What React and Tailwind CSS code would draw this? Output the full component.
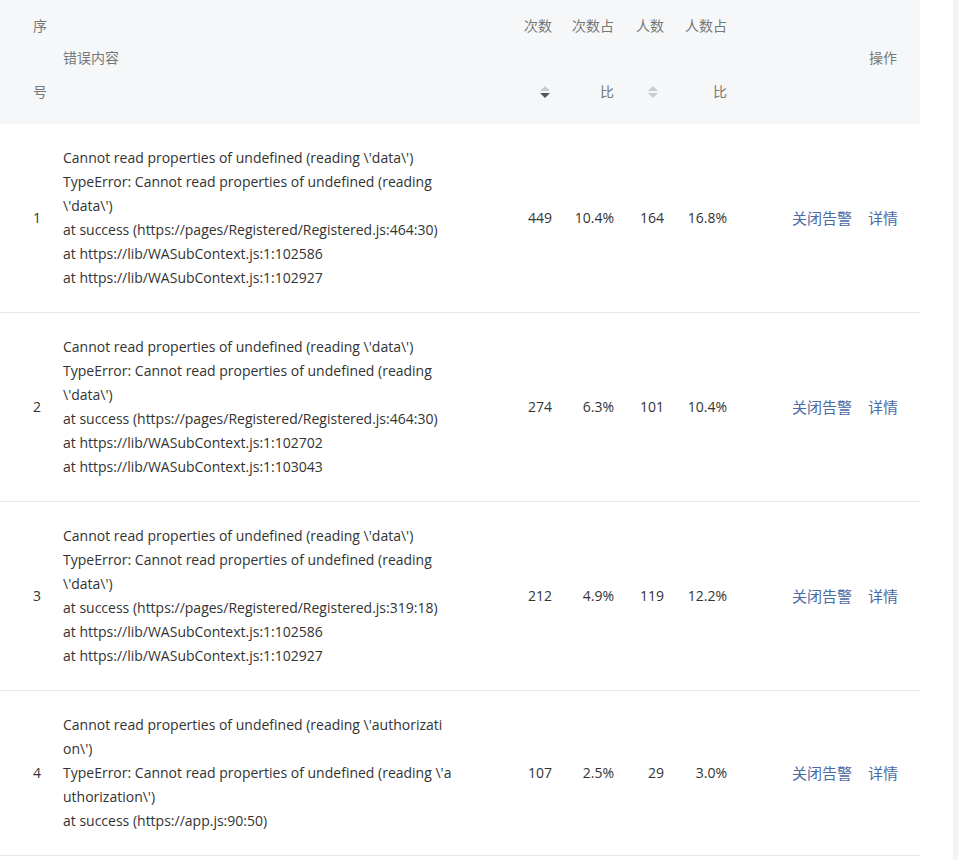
import React from 'react';

const rows = [
  {
    id: 1,
    lines: [
      "Cannot read properties of undefined (reading \\'data\\')",
      'TypeError: Cannot read properties of undefined (reading',
      "\\'data\\')",
      'at success (https://pages/Registered/Registered.js:464:30)',
      'at https://lib/WASubContext.js:1:102586',
      'at https://lib/WASubContext.js:1:102927',
    ],
    count: 449, countPct: '10.4%', users: 164, usersPct: '16.8%',
  },
  {
    id: 2,
    lines: [
      "Cannot read properties of undefined (reading \\'data\\')",
      'TypeError: Cannot read properties of undefined (reading',
      "\\'data\\')",
      'at success (https://pages/Registered/Registered.js:464:30)',
      'at https://lib/WASubContext.js:1:102702',
      'at https://lib/WASubContext.js:1:103043',
    ],
    count: 274, countPct: '6.3%', users: 101, usersPct: '10.4%',
  },
  {
    id: 3,
    lines: [
      "Cannot read properties of undefined (reading \\'data\\')",
      'TypeError: Cannot read properties of undefined (reading',
      "\\'data\\')",
      'at success (https://pages/Registered/Registered.js:319:18)',
      'at https://lib/WASubContext.js:1:102586',
      'at https://lib/WASubContext.js:1:102927',
    ],
    count: 212, countPct: '4.9%', users: 119, usersPct: '12.2%',
  },
  {
    id: 4,
    lines: [
      "Cannot read properties of undefined (reading \\'authorizati",
      "on\\')",
      "TypeError: Cannot read properties of undefined (reading \\'a",
      "uthorization\\')",
      'at success (https://app.js:90:50)',
    ],
    count: 107, countPct: '2.5%', users: 29, usersPct: '3.0%',
  },
];

const grid = 'grid grid-cols-[63px_442px_55px_62px_50px_63px_185px]';

function SortIcon({ active }) {
  return (
    <span className="inline-flex flex-col items-center gap-[2px]">
      <svg width="10" height="5" viewBox="0 0 10 5"><path d="M5 0L10 5H0z" fill="#c8cbd0" /></svg>
      <svg width="10" height="5" viewBox="0 0 10 5"><path d="M0 0H10L5 5z" fill={active ? '#555' : '#c8cbd0'} /></svg>
    </span>
  );
}

export default function App() {
  return (
    <div className="flex w-[958px] min-h-[860px] bg-white text-[14px] text-[#333]" style={{ fontFamily: '"Open Sans", "Noto Sans CJK SC", sans-serif' }}>
      <div className="w-[920px]">
        <div className={`${grid} h-[124px] bg-[#f6f7f9] text-[#777] leading-[33px] pt-[9px]`}>
          <div className="pl-[33px]">
            <div>序</div>
            <div className="h-[33px]"></div>
            <div>号</div>
          </div>
          <div className="flex items-center pb-[18px]">错误内容</div>
          <div className="text-right pr-[8px]">
            <div>次数</div>
            <div className="h-[33px]"></div>
            <div className="flex justify-end items-center h-[33px] pr-[2px]"><SortIcon active /></div>
          </div>
          <div className="text-right pr-[8px]">
            <div>次数占</div>
            <div className="h-[33px]"></div>
            <div>比</div>
          </div>
          <div className="text-right pr-[8px]">
            <div>人数</div>
            <div className="h-[33px]"></div>
            <div className="flex justify-center items-center h-[33px] pl-[20px]"><SortIcon /></div>
          </div>
          <div className="text-right pr-[8px]">
            <div>人数占</div>
            <div className="h-[33px]"></div>
            <div>比</div>
          </div>
          <div className="flex items-center justify-end pr-[23px] pb-[18px]">操作</div>
        </div>
        {rows.map((r) => (
          <div key={r.id} className={`${grid} border-b border-[#e8e8e8] py-[22px] leading-[24px] items-center`}>
            <div className="pl-[33px]">{r.id}</div>
            <div className="pr-[4px] whitespace-nowrap">
              {r.lines.map((l, i) => <div key={i}>{l}</div>)}
            </div>
            <div className="text-right pr-[8px]">{r.count}</div>
            <div className="text-right pr-[8px]">{r.countPct}</div>
            <div className="text-right pr-[8px]">{r.users}</div>
            <div className="text-right pr-[8px]">{r.usersPct}</div>
            <div className="flex justify-end gap-[16px] pr-[22px] text-[#4a6aa5] text-[15px]">
              <span>关闭告警</span>
              <span>详情</span>
            </div>
          </div>
        ))}
      </div>
      <div className="w-[33px]"></div>
      <div className="w-[5px] bg-[#f2f3f5]"></div>
    </div>
  );
}
